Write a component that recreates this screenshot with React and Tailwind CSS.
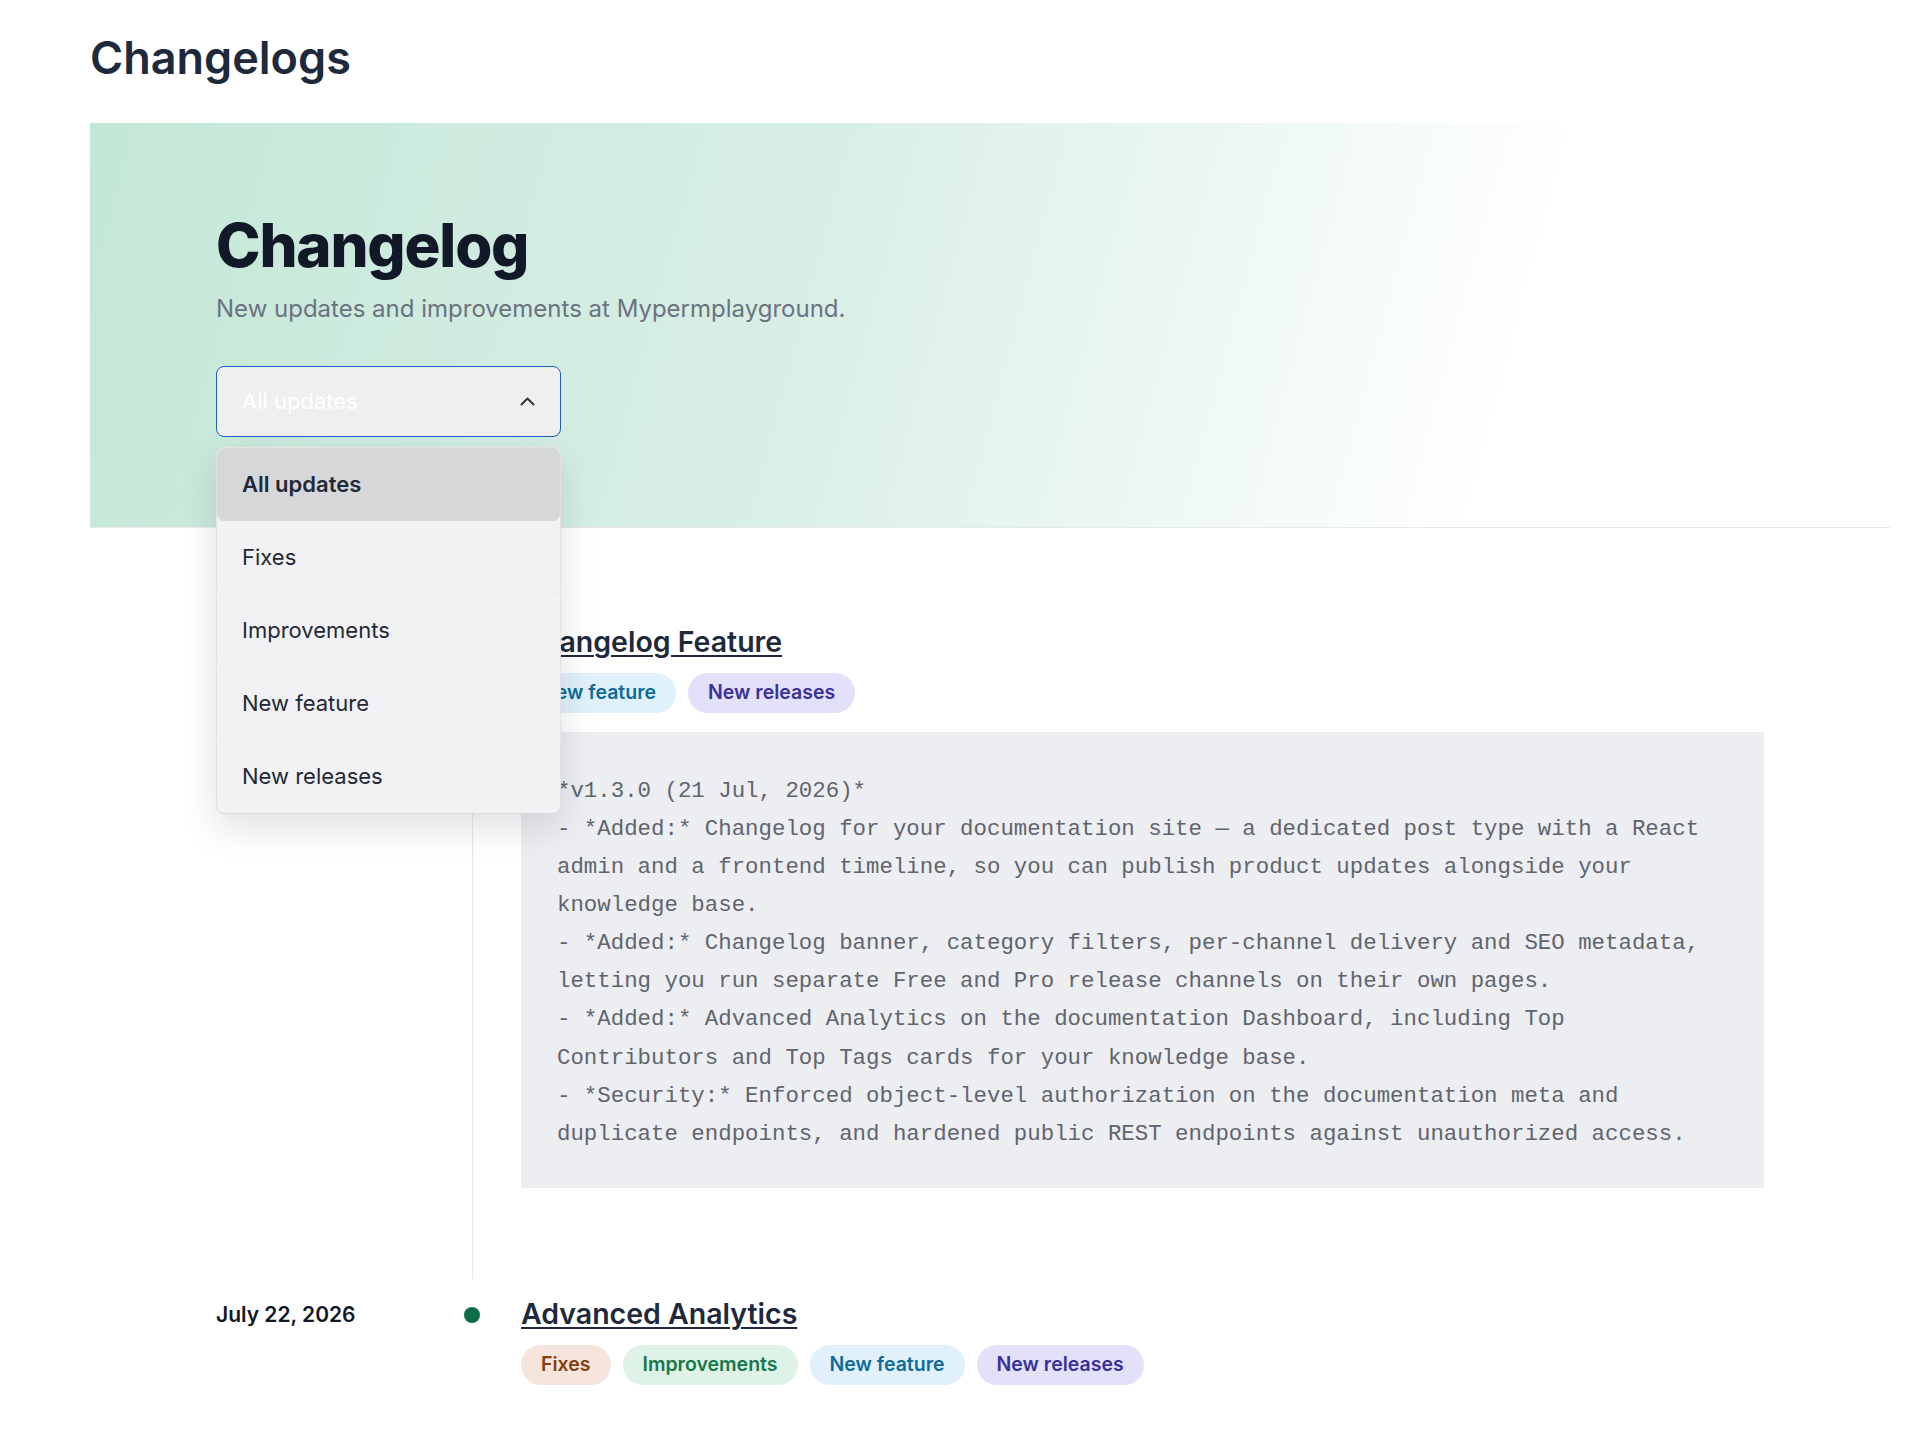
import React from "react";

const TAGS = {
  fixes: { label: "Fixes", cls: "bg-[#f6e5dc] text-[#86400f]" },
  improvements: { label: "Improvements", cls: "bg-[#dff2e8] text-[#17784a]" },
  feature: { label: "New feature", cls: "bg-[#e0f1fb] text-[#0d6c9c]" },
  releases: { label: "New releases", cls: "bg-[#e3e1fa] text-[#3a309c]" },
};

const NOTES = `*v1.3.0 (21 Jul, 2026)*
- *Added:* Changelog for your documentation site \u2014 a dedicated post type with a React admin and a frontend timeline, so you can publish product updates alongside your knowledge base.
- *Added:* Changelog banner, category filters, per-channel delivery and SEO metadata, letting you run separate Free and Pro release channels on their own pages.
- *Added:* Advanced Analytics on the documentation Dashboard, including Top Contributors and Top Tags cards for your knowledge base.
- *Security:* Enforced object-level authorization on the documentation meta and duplicate endpoints, and hardened public REST endpoints against unauthorized access.`;

const ENTRIES = [
  {
    date: "",
    title: "Changelog Feature",
    tags: ["feature", "releases"],
    notes: NOTES,
  },
  {
    date: "July 22, 2026",
    title: "Advanced Analytics",
    tags: ["fixes", "improvements", "feature", "releases"],
  },
];

const OPTIONS = ["All updates", "Fixes", "Improvements", "New feature", "New releases"];

function Tag({ kind }) {
  const t = TAGS[kind];
  return (
    <span
      className={`inline-flex h-10 items-center rounded-full px-5 text-[19.5px] font-semibold ${t.cls}`}
    >
      {t.label}
    </span>
  );
}

function FilterSelect() {
  return (
    <div className="relative mt-[39px] w-[345px]">
      <button
        type="button"
        className="flex h-[71px] w-full items-center justify-between rounded-lg border border-[#1b5fc1] bg-[#efeff0] pl-[25px] pr-[24px] text-left"
      >
        <span className="text-[22px] text-white">All updates</span>
        <svg width="15" height="9" viewBox="0 0 15 9" fill="none" className="mr-[1px]">
          <path d="M1.5 7.5 7.5 1.5l6 6" stroke="#2f3640" strokeWidth="2" strokeLinecap="round" strokeLinejoin="round" />
        </svg>
      </button>
      <ul className="absolute left-0 top-full z-20 mt-[10px] w-full rounded-lg border border-[#e3e3e6] bg-[#f2f2f4] shadow-[0_14px_36px_rgba(15,23,42,0.13)]">
        {OPTIONS.map((o, i) => (
          <li
            key={o}
            className={`flex h-[73px] items-center rounded-lg pl-[25px] text-[22px] text-[#1f2937] shadow-[0_1px_1px_rgba(0,0,0,0.05)] ${
              i === 0 ? "bg-[#d6d7d9] font-semibold" : "bg-[#f2f2f4]"
            }`}
          >
            {o}
          </li>
        ))}
      </ul>
    </div>
  );
}

function Entry({ entry, last }) {
  return (
    <article className="flex pt-[17px]">
      <div className="w-[248px] shrink-0 pt-[1px] text-[21px] font-semibold leading-[35px] text-[#111827]">
        {entry.date}
      </div>
      <div className="flex w-4 shrink-0 flex-col items-center">
        <span className="mt-[11px] h-4 w-4 rounded-full bg-[#0f6e48]" />
        {!last && <span className="w-px flex-1 bg-[#e5e7eb]" />}
      </div>
      <div className={`min-w-0 flex-1 pl-[41px] ${last ? "pb-[60px]" : "pb-[91px]"}`}>
        <h3 className="text-[28.5px] font-semibold leading-[35px] text-[#1e293b] underline decoration-2 underline-offset-[3px]">
          {entry.title}
        </h3>
        <div className="mt-[14px] flex flex-wrap gap-3">
          {entry.tags.map((t) => (
            <Tag key={t} kind={t} />
          ))}
        </div>
        {entry.notes && (
          <pre className="mt-[19px] whitespace-pre-wrap bg-[#edeef2] px-9 pb-[35px] pt-[40px] font-['Liberation_Mono',monospace] text-[22.4px] leading-[1.7] text-[#60646e]">
            {entry.notes}
          </pre>
        )}
      </div>
    </article>
  );
}

export default function App() {
  return (
    <div className="min-h-screen bg-white font-['Inter',sans-serif] text-[#1e293b]">
      <div className="pl-[90px] pr-4 pt-[31px]">
        <h1 className="text-[45px] font-semibold leading-[1.2] text-[#1e293b]">Changelogs</h1>

        <section className="relative z-10 mt-[38px] border-b border-[#e8e9eb] bg-[linear-gradient(105deg,#c3e7d7_0%,#d9efe6_40%,#eef8f4_62%,#ffffff_78%)] pb-[90px] pl-[126px] pt-[92px]">
          <h2 className="text-[60px] font-extrabold leading-none tracking-[-0.02em] text-[#111827]">
            Changelog
          </h2>
          <p className="mt-[16px] text-[24px] leading-[1.5] text-[#6b7280]">
            New updates and improvements at Mypermplayground.
          </p>
          <FilterSelect />
        </section>

        <div className="px-[126px] pt-[79px]">
          {ENTRIES.map((e, i) => (
            <Entry key={e.title} entry={e} last={i === ENTRIES.length - 1} />
          ))}
        </div>
      </div>
    </div>
  );
}
